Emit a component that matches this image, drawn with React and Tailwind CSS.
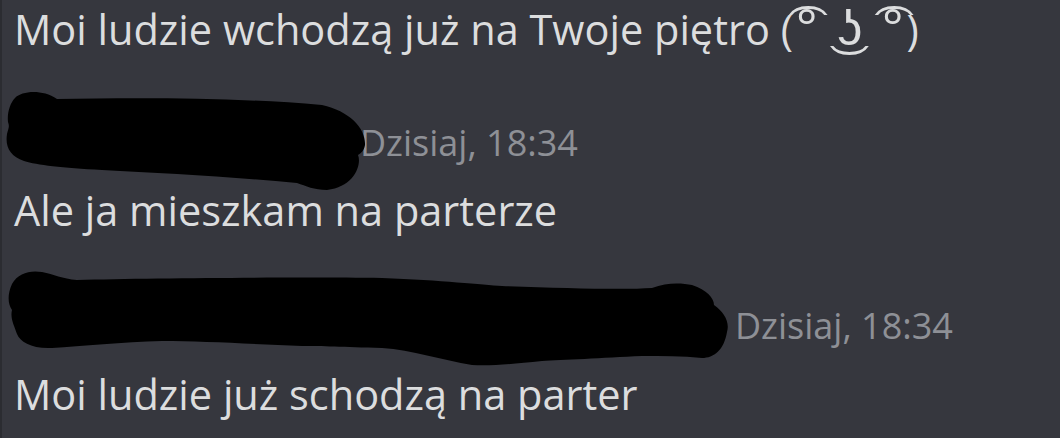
import React from "react";

function Blob1() {
  return (
    <svg width="366" height="104" viewBox="0 0 366 104" className="relative z-10 shrink-0 block">
      <path
        d="M13,9 C20,2 40,0 55,10 C130,9 230,8 320,16 C348,22 364,40 363,56 C362,62 359,64 356,66 C360,76 352,98 325,101 C312,101 304,97 295,94 C230,88 160,84 100,81 C60,79 35,76 22,72 C8,67 3,58 5,45 C6,40 8,38 6,33 C5,24 8,14 13,9 Z"
        fill="#000"
      />
    </svg>
  );
}

function Blob2() {
  return (
    <svg width="728" height="96" viewBox="0 0 728 96" className="relative z-10 shrink-0 block">
      <path
        d="M10,14 C16,3 28,0 40,2 C52,4 60,9 75,10 C150,8 300,7 380,8 C440,10 480,15 500,16 C560,18 620,20 650,18 C665,12 680,13 690,15 C705,20 712,28 712,35 C722,42 728,52 725,62 C722,80 712,88 700,88 C680,86 660,86 640,86 C600,88 560,90 540,91 C510,94 490,96 470,95 C440,90 410,80 380,78 C340,77 320,76 300,76 C250,74 200,71 160,71 C120,72 80,76 50,78 C30,79 18,72 15,64 C12,55 8,48 10,40 C6,34 5,25 10,14 Z"
        fill="#000"
      />
    </svg>
  );
}

export default function App() {
  return (
    <div className="w-[1060px] h-[438px] overflow-hidden bg-[#36373e] border-l-2 border-[#2b2c31] font-['Open_Sans',sans-serif] text-[#dcddde]">
      <p className="pl-[12px] text-[41.5px] leading-[52px] whitespace-nowrap">
        Moi ludzie wchodzą już na Twoje piętro (<span className="text-[50px] tracking-[3px]">͡° ͜ʖ ͡°</span>)
      </p>
      <div className="mt-[34px] flex items-start h-[104px]">
        <Blob1 />
        <span className="-ml-[8px] mt-[34px] text-[36px] leading-[40px] text-[#8e9096] whitespace-nowrap">
          Dzisiaj, 18:34
        </span>
      </div>
      <p className="-mt-[9px] pl-[12px] text-[41.5px] leading-[52px] whitespace-nowrap">
        Ale ja mieszkam na parterze
      </p>
      <div className="mt-[34px] flex items-start h-[96px]">
        <Blob2 />
        <span className="ml-[5px] mt-[36px] text-[36px] leading-[40px] text-[#8e9096] whitespace-nowrap">
          Dzisiaj, 18:34
        </span>
      </div>
      <p className="mt-[2px] pl-[12px] text-[41.5px] leading-[52px] whitespace-nowrap">
        Moi ludzie już schodzą na parter
      </p>
    </div>
  );
}
